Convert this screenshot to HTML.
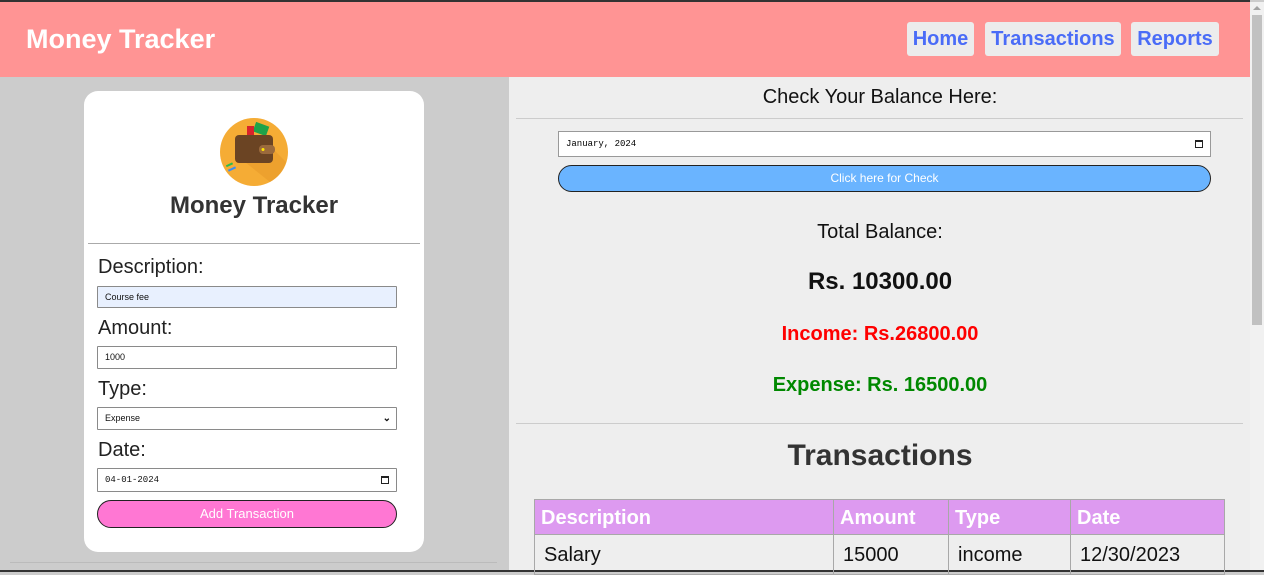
<!DOCTYPE html>
<html><head><meta charset="utf-8"><style>
*{box-sizing:border-box;margin:0;padding:0}
body{width:1264px;height:572px;overflow:hidden;position:relative;font-family:"Liberation Sans",Arial,sans-serif;background:#ccc}
.a{position:absolute}
.hdr{left:0;top:0;width:1250px;height:77px;background:#ff9494;border-top:2px solid #333}
.nav{top:22px;height:34px;background:#ececec;border-radius:3px;color:#4a6cf7;font-weight:bold;font-size:20px;line-height:35px;text-align:center}
.inp{left:97px;width:300px;background:#fff;border:1px solid #8a8a8a;font-size:9px;padding-left:7px;color:#111;border-radius:1px}
.lbl{left:98px;font-size:20px;color:#222}
.c{text-align:center}
td,th{border:1px solid #a8a8a8;text-align:left;padding-left:9px;font-size:20px;padding-top:2px}
</style></head><body>
<div class="a hdr"></div>
<div class="a" style="left:26px;top:24px;font-size:27px;font-weight:bold;color:#fff">Money Tracker</div>
<div class="a nav" style="left:907px;width:67px">Home</div>
<div class="a nav" style="left:985px;width:136px">Transactions</div>
<div class="a nav" style="left:1131px;width:88px">Reports</div>
<div class="a" style="left:1250px;top:2px;width:14px;height:570px;background:#f1f1f1"></div>
<div class="a" style="left:1252px;top:15px;width:10px;height:310px;background:#c1c1c1"></div>
<div class="a" style="left:1253px;top:6px;width:0;height:0;border:4px solid transparent;border-bottom:4px solid #a3a3a3;border-top:0"></div>
<div class="a" style="left:509px;top:77px;width:741px;height:495px;background:#eee"></div>
<div class="a" style="left:10px;top:562px;width:487px;height:1px;background:#bbb"></div>
<div class="a" style="left:0;top:570px;width:1264px;height:2px;background:#333"></div>
<!-- card -->
<div class="a" style="left:84px;top:91px;width:340px;height:461px;background:#fff;border-radius:14px"></div>
<svg class="a" style="left:220px;top:118px" width="68" height="68" viewBox="0 0 68 68">
<circle cx="34" cy="34" r="34" fill="#f5ac35"/>
<path d="M20 40 L50 64 A34 34 0 0 0 66 44 L52 30 Z" fill="#e89a2a" opacity=".6"/>
<rect x="34" y="6" width="14" height="10" fill="#1fa34a" transform="rotate(20 41 11)"/>
<rect x="27" y="8" width="7" height="10" fill="#d8232a"/>
<rect x="15" y="17" width="38" height="28" rx="4" fill="#6b4423"/>
<rect x="39" y="27" width="16" height="9" rx="4" fill="#9b6a3c"/>
<circle cx="43" cy="31.5" r="1.5" fill="#ffe600"/>
<rect x="6" y="46" width="7" height="2" fill="#2dbb4e" transform="rotate(-25 9 47)"/>
<rect x="8" y="50" width="8" height="2" fill="#3c8ef0" transform="rotate(-25 12 51)"/>
</svg>
<div class="a c" style="left:84px;width:340px;top:192px;font-size:24px;font-weight:bold;color:#333">Money Tracker</div>
<div class="a" style="left:88px;top:243px;width:332px;height:1px;background:#aaa"></div>
<div class="a lbl" style="top:256px">Description:</div>
<div class="a inp" style="top:286px;height:22px;line-height:20px;background:#e8f0fe">Course fee</div>
<div class="a lbl" style="top:317px">Amount:</div>
<div class="a inp" style="top:346px;height:23px;line-height:21px">1000</div>
<div class="a lbl" style="top:378px">Type:</div>
<div class="a inp" style="top:407px;height:23px;line-height:21px">Expense<span style="position:absolute;right:5px;font-size:10px;font-weight:bold">⌄</span></div>
<div class="a lbl" style="top:439px">Date:</div>
<div class="a inp" style="top:468px;height:24px;line-height:22px;font-family:'Liberation Mono',monospace">04-01-2024<span style="position:absolute;right:7px;top:7px;width:8px;height:8px;border:1.5px solid #222;border-top-width:2.5px"></span></div>
<div class="a c" style="left:97px;top:500px;width:300px;height:28px;background:#ff77d3;border:1px solid #222;border-radius:14px;color:#fff;font-size:13px;line-height:26px">Add Transaction</div>
<!-- right -->
<div class="a c" style="left:516px;width:728px;top:86px;font-size:20px;color:#111">Check Your Balance Here:</div>
<div class="a" style="left:516px;top:118px;width:727px;height:1px;background:#ccc"></div>
<div class="a" style="left:558px;top:131px;width:653px;height:26px;background:#fff;border:1px solid #999;font-family:'Liberation Mono',monospace;font-size:9px;line-height:25px;padding-left:7px">January, 2024<span style="position:absolute;right:7px;top:8px;width:8px;height:8px;border:1.5px solid #222;border-top-width:2.5px"></span></div>
<div class="a c" style="left:558px;top:165px;width:653px;height:27px;background:#6ab4ff;border:1px solid #222;border-radius:14px;color:#fff;font-size:12px;line-height:25px">Click here for Check</div>
<div class="a c" style="left:516px;width:728px;top:221px;font-size:20px;color:#111">Total Balance:</div>
<div class="a c" style="left:516px;width:728px;top:268px;font-size:24px;font-weight:bold;color:#111">Rs. 10300.00</div>
<div class="a c" style="left:516px;width:728px;top:323px;font-size:20px;font-weight:bold;color:#f00">Income: Rs.26800.00</div>
<div class="a c" style="left:516px;width:728px;top:374px;font-size:20px;font-weight:bold;color:#080">Expense: Rs. 16500.00</div>
<div class="a" style="left:516px;top:423px;width:727px;height:1px;background:#ccc"></div>
<div class="a c" style="left:516px;width:728px;top:439px;font-size:30px;font-weight:bold;color:#333">Transactions</div>
<table class="a" style="left:534px;top:499px;width:691px;border-collapse:collapse">
<tr style="background:#dd9af0;color:#fff;height:35px"><th style="width:299px;padding-left:6px">Description</th><th style="width:115px;padding-left:6px">Amount</th><th style="width:122px;padding-left:6px">Type</th><th style="padding-left:6px">Date</th></tr>
<tr style="height:40px;color:#111"><td>Salary</td><td>15000</td><td>income</td><td>12/30/2023</td></tr>
</table>
</body></html>
